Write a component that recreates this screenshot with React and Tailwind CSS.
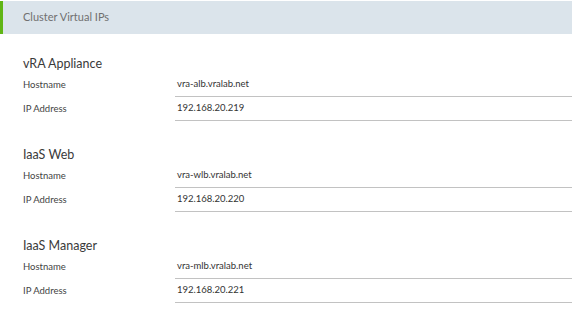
const sections = [
  { title: "vRA Appliance", hostname: "vra-alb.vralab.net", ip: "192.168.20.219" },
  { title: "IaaS Web", hostname: "vra-wlb.vralab.net", ip: "192.168.20.220" },
  { title: "IaaS Manager", hostname: "vra-mlb.vralab.net", ip: "192.168.20.221" },
];

function Field({ label, value }) {
  return (
    <div className="flex h-[24px] items-stretch">
      <div className="w-[152px] flex items-center text-[9.5px] text-[#444]">{label}</div>
      <div className="flex-1 flex items-center pl-[2px] border-b border-[#c2c2c2] text-[9.5px] text-[#333]">
        {value}
      </div>
    </div>
  );
}

export default function App() {
  return (
    <div className="w-[572px] h-[315px] bg-white overflow-hidden" style={{ fontFamily: "Lato, 'Noto Sans', sans-serif" }}>
      <div className="mt-[1px] h-[33px] flex items-center bg-[#dbe4eb] border-l-[3px] border-[#60b515] pl-[20px]">
        <span className="text-[11px] text-[#707070]">Cluster Virtual IPs</span>
      </div>

      <div className="pl-[23px] pt-[22px] flex flex-col gap-[26px]">
        {sections.map((s) => (
          <div key={s.title}>
            <div className="h-[17px] flex items-center text-[12.5px] text-[#3a3a3a]">{s.title}</div>
            <Field label="Hostname" value={s.hostname} />
            <Field label="IP Address" value={s.ip} />
          </div>
        ))}
      </div>
    </div>
  );
}
